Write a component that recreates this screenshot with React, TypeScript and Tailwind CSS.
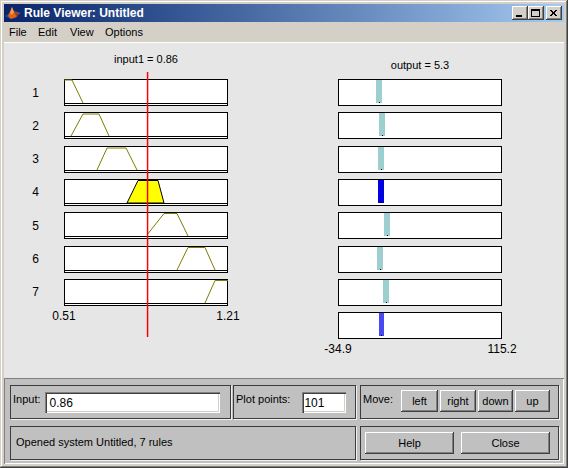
import React from "react";

const FONT = { fontFamily: '"Liberation Sans", Arial, sans-serif' };

type MF = { pts: string; filled?: boolean };

const leftMFs: MF[] = [
  { pts: "0,1 8,1 19,24" },
  { pts: "7,24 19,2 35,2 45,24" },
  { pts: "33,24 43,2 62,2 73,24" },
  { pts: "63,24 74,1.5 94,1.5 100,24", filled: true },
  { pts: "83,23 100,1.5 113,1.5 124,24" },
  { pts: "113,24 124,1.5 141,1.5 151,24" },
  { pts: "141,24 151,1.5 164,1.5" },
];

const rightBars = [
  { x: 38, w: 6, c: "#9dcfd0" },
  { x: 41, w: 6, c: "#9dcfd0" },
  { x: 40, w: 6, c: "#9dcfd0" },
  { x: 40, w: 6, c: "#0000e0" },
  { x: 46, w: 6, c: "#9dcfd0" },
  { x: 39, w: 6, c: "#9dcfd0" },
  { x: 45, w: 6, c: "#9dcfd0" },
  { x: 41, w: 5, c: "#4848f4" },
];

function LeftBox({ mf }: { mf: MF }) {
  return (
    <svg width={164} height={27} className="block">
      <rect x={0.5} y={0.5} width={163} height={26} fill="#ffffff" stroke="#000000" />
      {mf.filled ? (
        <polygon points={mf.pts} fill="#ffff00" stroke="#000000" strokeWidth={1} />
      ) : (
        <polyline points={mf.pts} fill="none" stroke="#7d7d00" strokeWidth={1} />
      )}
      <line x1={0} y1={24.5} x2={164} y2={24.5} stroke="#000000" />
    </svg>
  );
}

function RightBox({ bar }: { bar: { x: number; w: number; c: string } }) {
  return (
    <svg width={164} height={27} className="block">
      <rect x={0.5} y={0.5} width={163} height={26} fill="#ffffff" stroke="#000000" />
      <rect x={bar.x} y={1} width={bar.w} height={23} fill={bar.c} />
      <rect x={bar.x + Math.floor(bar.w / 2)} y={23} width={1} height={1} fill="#000000" />
    </svg>
  );
}

function MatlabIcon() {
  return (
    <svg width={16} height={16} viewBox="0 0 16 16" className="block">
      <polygon points="0,11 6,14 16,8 9,6" fill="#3566b0" />
      <polygon points="0,11 4,8 6,14" fill="#1f4488" />
      <polygon points="3,11 7,2 9,7 12,12 6,14" fill="#e0621a" />
      <polygon points="7,2 9,7 7,10 5,8" fill="#ff9a3c" />
      <polygon points="9,7 12,12 14,8" fill="#b83a10" />
    </svg>
  );
}

function TitleButton({ kind }: { kind: "min" | "max" | "close" }) {
  return (
    <div className="w-[16px] h-[14px] bg-[#d4d0c8] shadow-[inset_-1px_-1px_0_#404040,inset_1px_1px_0_#ffffff,inset_-2px_-2px_0_#808080] flex items-center justify-center">
      <svg width={10} height={9} viewBox="0 0 10 9" className="block">
        {kind === "min" && <rect x={1} y={6} width={6} height={2} fill="#000" />}
        {kind === "max" && (
          <>
            <rect x={0.5} y={0.5} width={8} height={7} fill="none" stroke="#000" />
            <rect x={0} y={0} width={9} height={2} fill="#000" />
          </>
        )}
        {kind === "close" && (
          <path d="M1,1 L7,7 M2,1 L8,7 M7,1 L1,7 M8,1 L2,7" stroke="#000" strokeWidth={1} />
        )}
      </svg>
    </div>
  );
}

const raised =
  "bg-[#c0c0c0] shadow-[inset_-1px_-1px_0_#404040,inset_1px_1px_0_#ffffff,inset_-2px_-2px_0_#808080]";
const sunken =
  "bg-white shadow-[inset_1px_1px_0_#808080,inset_2px_2px_0_#404040,inset_-1px_-1px_0_#ffffff,inset_-2px_-2px_0_#d4d0c8]";
const groupBox = "border border-[#3c3c3c] shadow-[1px_1px_0_#f0f0f0]";

export default function App() {
  return (
    <div
      className="w-[568px] h-[468px] bg-[#d4d0c8] p-[4px] flex flex-col shadow-[inset_-1px_-1px_0_#404040,inset_1px_1px_0_#d4d0c8,inset_-2px_-2px_0_#808080,inset_2px_2px_0_#ffffff] text-black"
      style={FONT}
    >
      {/* Title bar */}
      <div className="h-[18px] flex items-center bg-gradient-to-r from-[#0a246a] to-[#a6caf0] pl-[1px] pr-[2px]">
        <MatlabIcon />
        <span className="ml-[3px] text-white font-bold text-[12px] leading-none">Rule Viewer: Untitled</span>
        <div className="ml-auto flex items-center">
          <TitleButton kind="min" />
          <TitleButton kind="max" />
          <div className="w-[2px]" />
          <TitleButton kind="close" />
        </div>
      </div>

      {/* Menu */}
      <div className="h-[20px] flex items-center text-[11px] pl-[5px]">
        <span className="w-[29px]">File</span>
        <span className="w-[32px]">Edit</span>
        <span className="w-[35px]">View</span>
        <span>Options</span>
      </div>
      <div className="h-px bg-white" />

      {/* Main plot area */}
      <div className="relative h-[335px] bg-[#e6e6e6] flex">
        {/* Left column */}
        <div className="w-[224px] flex flex-col">
          <div className="mt-[9px] h-[14px] leading-[14px] text-[11px] pl-[60px] w-[224px] text-center">
            input1 = 0.86
          </div>
          <div className="mt-[13px] flex flex-col gap-[6.33px]">
            {leftMFs.map((mf, i) => (
              <div key={i} className="flex items-center">
                <div className="w-[60px] text-center text-[12px] pl-[3px]">{i + 1}</div>
                <LeftBox mf={mf} />
              </div>
            ))}
          </div>
          <div className="mt-[3px] ml-[40px] w-[204px] flex justify-between text-[12px] leading-[14px]">
            <span className="w-[40px] text-center">0.51</span>
            <span className="w-[40px] text-center">1.21</span>
          </div>
        </div>

        {/* Right column */}
        <div className="ml-[110px] w-[164px] flex flex-col">
          <div className="mt-[15px] h-[14px] leading-[14px] text-[11px] w-[164px] text-center">output = 5.3</div>
          <div className="mt-[7px] flex flex-col gap-[6.33px]">
            {rightBars.map((b, i) => (
              <RightBox key={i} bar={b} />
            ))}
          </div>
          <div className="mt-[3px] -ml-[20px] w-[204px] flex justify-between text-[12px] leading-[14px]">
            <span className="w-[40px] text-center">-34.9</span>
            <span className="w-[40px] text-center">115.2</span>
          </div>
        </div>

        {/* Input marker line */}
        <svg className="absolute left-[142px] top-[29px]" width={3} height={265}>
          <rect x={1} y={0} width={1} height={265} fill="#ff0000" />
          <rect x={2} y={0} width={1} height={265} fill="#ff0000" opacity={0.3} />
          <rect x={0} y={0} width={1} height={265} fill="#ff0000" opacity={0.15} />
        </svg>
      </div>

      {/* Bottom panel */}
      <div className="h-[86px] bg-[#c0c0c0] shadow-[inset_1px_1px_0_#808080,inset_-1px_-1px_0_#ffffff] pt-[7px] pl-[6px] flex flex-col gap-[7px] text-[11px]">
        <div className="flex h-[34px]">
          <div className={`${groupBox} w-[221px] h-[34px] relative flex items-start`}>
            <span className="mt-[5px] ml-[2px]">Input:</span>
            <div className={`${sunken} ml-[4px] mt-[6px] w-[175px] h-[21px] flex items-center pl-[5px] text-[12px]`}>0.86</div>
          </div>
          <div className={`${groupBox} ml-[2px] w-[123px] h-[34px] flex items-start`}>
            <span className="mt-[5px] ml-[2px]">Plot points:</span>
            <div className={`${sunken} ml-[12px] mt-[6px] w-[44px] h-[21px] flex items-center pl-[2px] text-[12px]`}>101</div>
          </div>
          <div className={`${groupBox} ml-[4px] w-[199px] h-[34px] flex items-start`}>
            <span className="mt-[5px] ml-[2px]">Move:</span>
            <div className="ml-[8px] mt-[4px] flex gap-[2px]">
              <button className={`${raised} w-[37px] h-[22px] text-[11px]`}>left</button>
              <button className={`${raised} w-[36px] h-[22px] text-[11px]`}>right</button>
              <button className={`${raised} w-[35px] h-[22px] text-[11px]`}>down</button>
              <button className={`${raised} w-[35px] h-[22px] text-[11px]`}>up</button>
            </div>
          </div>
        </div>
        <div className="flex h-[34px]">
          <div className={`${groupBox} w-[346px] h-[34px] flex items-start`}>
            <span className="mt-[7px] ml-[5px]">Opened system Untitled, 7 rules</span>
          </div>
          <div className={`${groupBox} ml-[4px] w-[199px] h-[34px] flex items-center pl-[4px] gap-[7px]`}>
            <button className={`${raised} w-[89px] h-[22px] text-[11px]`}>Help</button>
            <button className={`${raised} w-[89px] h-[22px] text-[11px]`}>Close</button>
          </div>
        </div>
      </div>
    </div>
  );
}
